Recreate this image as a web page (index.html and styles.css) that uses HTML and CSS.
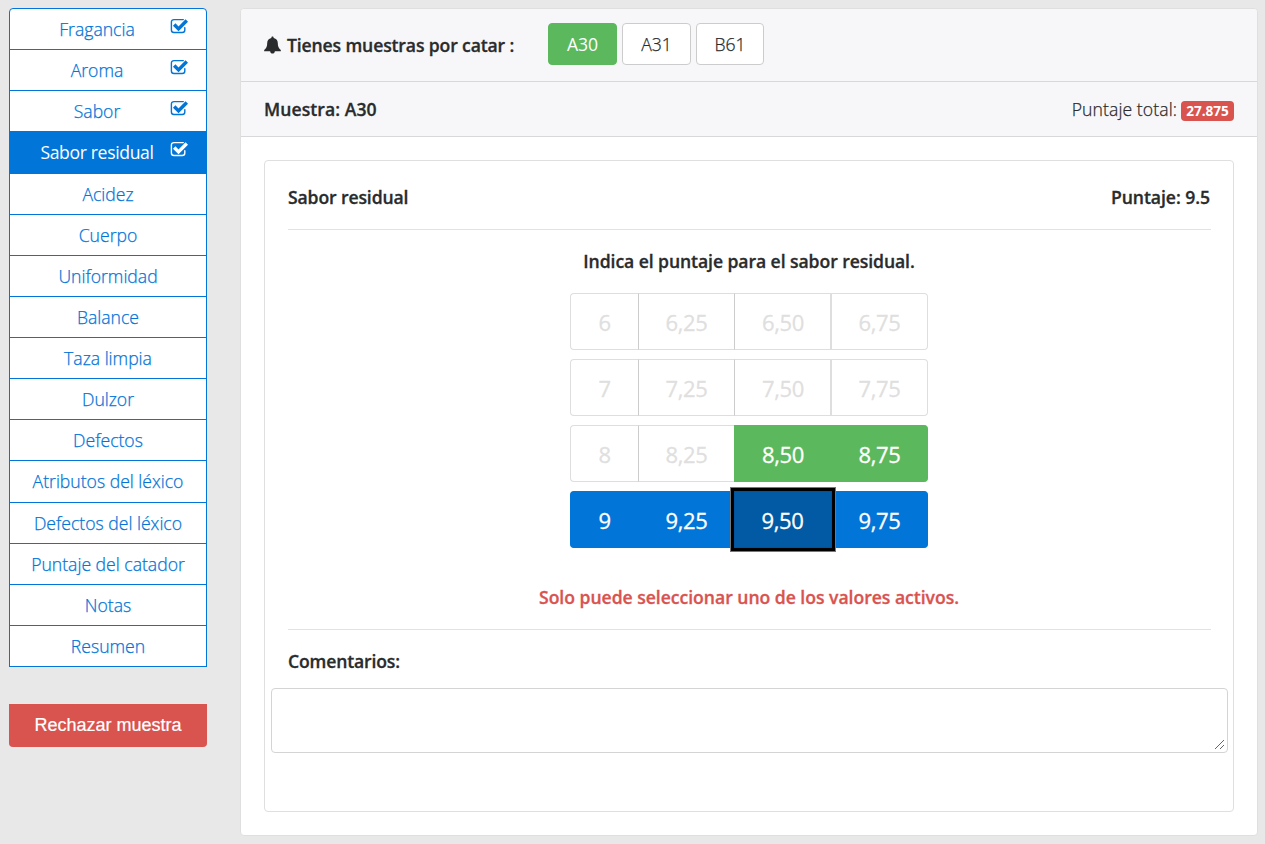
FILE: index.html
```html
<!DOCTYPE html>
<html lang="es">
<head>
<meta charset="utf-8">
<title>Catación</title>
<link rel="stylesheet" href="styles.css">
</head>
<body>
<svg class="defs" width="0" height="0">
  <symbol id="check" viewBox="0 0 18 16">
    <path d="M13.300 1.600H4C2.400 1.600 1.400 2.600 1.400 4.100v7.900c0 1.500 1 2.500 2.600 2.500h8.300c1.600 0 2.500-1 2.500-2.500V9.600" fill="none" stroke="currentColor" stroke-width="1.400" stroke-linecap="round"/>
    <path d="M4.200 6.600l4.300 4.300L16.800 2.600" fill="none" stroke="currentColor" stroke-width="3.500"/>
  </symbol>
</svg>
<div class="page">
  <aside class="sidebar">
    <nav class="steps">
      <a class="step done"><span>Fragancia</span><svg class="check"><use href="#check"/></svg></a>
      <a class="step done"><span>Aroma</span><svg class="check"><use href="#check"/></svg></a>
      <a class="step done"><span>Sabor</span><svg class="check"><use href="#check"/></svg></a>
      <a class="step done active"><span>Sabor residual</span><svg class="check"><use href="#check"/></svg></a>
      <a class="step"><span>Acidez</span></a>
      <a class="step"><span>Cuerpo</span></a>
      <a class="step"><span>Uniformidad</span></a>
      <a class="step"><span>Balance</span></a>
      <a class="step"><span>Taza limpia</span></a>
      <a class="step"><span>Dulzor</span></a>
      <a class="step"><span>Defectos</span></a>
      <a class="step"><span>Atributos del léxico</span></a>
      <a class="step"><span>Defectos del léxico</span></a>
      <a class="step"><span>Puntaje del catador</span></a>
      <a class="step"><span>Notas</span></a>
      <a class="step"><span>Resumen</span></a>
    </nav>
    <button class="reject">Rechazar muestra</button>
  </aside>
  <main class="card">
    <header class="samples">
      <svg class="bell" viewBox="0 0 18 18"><path d="M9 0c.7 0 1.200.5 1.200 1.200v.3c2.900.6 4.400 2.600 4.400 5.300 0 3.900 1.100 5.900 3.200 7.400v1.300H.2v-1.300C2.300 12.700 3.400 10.700 3.400 6.800c0-2.700 1.500-4.700 4.400-5.300v-.3C7.800.5 8.300 0 9 0zM6.500 15.500h5C11.400 17 10.300 18 9 18s-2.400-1-2.500-2.500z" fill="currentColor"/></svg>
      <strong class="pending">Tienes muestras por catar :</strong>
      <div class="tabs">
        <button class="tab selected">A30</button>
        <button class="tab">A31</button>
        <button class="tab narrow">B61</button>
      </div>
    </header>
    <header class="current">
      <strong class="sample">Muestra: A30</strong>
      <div class="total"><span class="label">Puntaje total:</span><span class="badge">27.875</span></div>
    </header>
    <section class="panel">
      <div class="title"><strong class="attribute">Sabor residual</strong><strong class="score">Puntaje: 9.5</strong></div>
      <hr>
      <p class="question">Indica el puntaje para el sabor residual.</p>
      <div class="scale">
        <div class="row"><button>6</button><button>6,25</button><button>6,50</button><button>6,75</button></div>
        <div class="row"><button>7</button><button>7,25</button><button>7,50</button><button>7,75</button></div>
        <div class="row"><button>8</button><button>8,25</button><button class="good">8,50</button><button class="good">8,75</button></div>
        <div class="row blue"><button>9</button><button>9,25</button><button class="chosen">9,50</button><button>9,75</button></div>
      </div>
      <p class="warning">Solo puede seleccionar uno de los valores activos.</p>
      <hr>
      <label class="comments">Comentarios:</label>
      <textarea></textarea>
    </section>
  </main>
</div>
</body>
</html>
```
FILE: styles.css
```css
* { box-sizing: border-box; }
body {
  margin: 0;
  background: #e8e8e8;
  color: #292b2c;
  font-family: "Open Sans", "Noto Sans", sans-serif;
  font-size: 17.6px;
}
button { font-family: inherit; margin: 0; }
p { margin: 0; }
.defs { position: absolute; }
.page {
  display: flex;
  gap: 33px;
  height: 844px;
  padding: 8px 7px 8px 9px;
}
.sidebar { width: 198px; }
.steps { display: flex; flex-direction: column; }
.step {
  display: flex;
  align-items: center;
  justify-content: center;
  height: 42.125px;
  margin-top: -1px;
  background: #fff;
  border: 1px solid #0275d8;
  color: #0275d8;
  font-weight: 300;
  -webkit-text-stroke: 0.25px currentColor;
  white-space: nowrap;
}
.step:first-child { margin-top: 0; border-radius: 4px 4px 0 0; }
.step.done { justify-content: flex-end; padding-right: 18px; }
.step.done span { flex: 1; text-align: center; padding-left: 14px; }
.step.active { background: #0275d8; color: #fff; font-weight: 400; letter-spacing: -0.36px; -webkit-text-stroke: 0; }
.check { width: 18px; height: 16px; margin-bottom: 7px; }
.reject {
  width: 198px;
  height: 43px;
  margin-top: 37px;
  padding: 0 0 1px;
  border: 0;
  border-radius: 0 0 4px 4px;
  background: #d9534f;
  color: #fff;
  font: 18px "Liberation Sans", sans-serif;
  -webkit-text-stroke: 0.2px currentColor;
}
.card {
  width: 1018px;
  height: 828px;
  border: 1px solid #dfdfdf;
  border-radius: 4px;
  background: #fff;
}
.samples, .current {
  display: flex;
  align-items: center;
  background: #f7f7f9;
  border-bottom: 1px solid #d8d8da;
  padding: 0 23px;
}
.samples { height: 73px; padding-bottom: 3px; border-radius: 4px 4px 0 0; }
.current { height: 55px; justify-content: space-between; }
.bell { width: 17px; height: 18px; margin: 3px 6px 0 0; }
strong, .question, .warning, .comments {
  font-weight: 600;
  letter-spacing: -0.13px;
  -webkit-text-stroke: 0.3px currentColor;
  white-space: nowrap;
}
.pending { width: 261px; padding-top: 2px; letter-spacing: -0.14px; }
.sample { letter-spacing: 0.06px; }
.score { letter-spacing: -0.05px; }
.tabs { display: flex; gap: 5px; }
.tab {
  width: 69px;
  height: 42px;
  padding: 0;
  border: 1px solid #ccc;
  border-radius: 4px;
  background: #fff;
  color: #292b2c;
  font-size: 17.6px;
  font-weight: 300;
  -webkit-text-stroke: 0.25px currentColor;
}
.tab.narrow { width: 68px; }
.tab.selected { background: #5cb85c; border-color: #5cb85c; color: #fff; font-weight: 400; -webkit-text-stroke: 0; }
.total { display: flex; align-items: center; gap: 4px; }
.label { font-weight: 300; letter-spacing: 0.09px; -webkit-text-stroke: 0.25px currentColor; }
.badge {
  width: 53px;
  height: 20px;
  margin-top: 3px;
  border-radius: 4px;
  background: #d9534f;
  color: #fff;
  font-size: 13.6px;
  font-weight: 700;
  line-height: 20px;
  text-align: center;
}
.panel {
  display: flex;
  flex-direction: column;
  width: 970px;
  height: 652px;
  margin: 23px 0 0 23px;
  border: 1px solid #dfdfdf;
  border-radius: 4px;
}
.title { display: flex; justify-content: space-between; height: 68px; padding: 23px 23px 0; line-height: 26px; }
hr { width: 923px; height: 1px; margin: 0 23px; border: 0; background: #e2e2e2; }
.question { height: 63px; padding-top: 18px; text-align: center; line-height: 26px; letter-spacing: -0.08px; }
.scale { display: flex; flex-direction: column; gap: 9px; width: 358px; margin-left: 305px; }
.row { display: grid; grid-template-columns: 68px 96px 97px 97px; height: 57px; }
.row button {
  padding: 1px 0 0;
  border: 1px solid #dedede;
  border-right-width: 0;
  background: #fff;
  color: #dfdfdf;
  font-size: 22px;
  font-weight: 400;
  letter-spacing: -0.4px;
  -webkit-text-stroke: 0.3px currentColor;
}
.row button + button { border-left-color: #ccc; }
.row button:last-child { margin-left: -1px; border-left: 2px solid #dedede; border-right-width: 1px; border-radius: 0 4px 4px 0; }
.row button:first-child { border-radius: 4px 0 0 4px; }
.row button.good:nth-child(n) { background: #5cb85c; border-color: #5cb85c; color: #fff; }
.blue button:nth-child(n) { background: #0275d8; border-color: #0275d8; color: #fff; }
.blue button.chosen:nth-child(n) {
  width: 98px;
  padding-right: 1px;
  background: #025aa5;
  border: 1px solid #01549b;
  outline: 3px solid #000;
  box-shadow: 0 0 0 4px #777;
  z-index: 1;
}
.warning { height: 81px; padding-top: 36px; color: #d9534f; text-align: center; line-height: 26px; letter-spacing: -0.03px; }
.comments { height: 58px; padding: 18px 23px 0; line-height: 26px; letter-spacing: -0.16px; }
textarea {
  width: 957px;
  height: 65px;
  margin: 0 0 0 6px;
  border: 1px solid #d4d4d4;
  border-radius: 4px;
  background: #fff;
  resize: vertical;
}
textarea::-webkit-resizer {
  background:
    repeating-linear-gradient(135deg, transparent 0 100%);
}
textarea::-webkit-resizer {
  background: linear-gradient(135deg, transparent 0 49%, #666 49% 55%, transparent 55% 74%, #666 74% 80%, transparent 80%) 3px 3px / 9px 9px no-repeat;
}
```
